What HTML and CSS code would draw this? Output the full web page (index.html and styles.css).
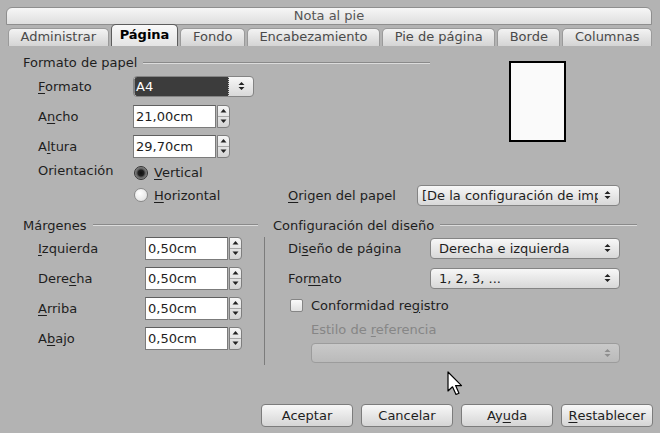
FILE: index.html
```html
<!DOCTYPE html>
<html lang="es">
<head>
    <meta charset="UTF-8">
    <title>Nota al pie</title>
    <link rel="stylesheet" href="styles.css">
</head>
<body>
  <div class="dialog">
    <!-- Title -->
    <div class="titlebar">Nota al pie</div>

    <!-- Tabs -->
    <div class="tabs">
      <div class="tab">Administrar</div>
      <div class="tab active">Página</div>
      <div class="tab">Fondo</div>
      <div class="tab">Encabezamiento</div>
      <div class="tab">Pie de página</div>
      <div class="tab">Borde</div>
      <div class="tab">Columnas</div>
    </div>

    <div class="page">
      <!-- Formato de papel -->
      <div class="paper">
        <div class="heading paper-title">Formato de papel</div>
        <div class="preview"></div>

        <div class="lbl"><span><u>F</u>ormato</span></div>
        <div class="select hl">
          <span class="txt">A4</span>
          <svg class="updown" width="7" height="10" viewBox="0 0 7 10"><path d="M0.5 4 L3.5 1 L6.5 4 Z M0.5 6 L3.5 9 L6.5 6 Z"/></svg>
        </div>

        <div class="lbl"><span>A<u>n</u>cho</span></div>
        <div class="spin">
          <div class="spin-input">21,00cm</div>
          <div class="spin-btns">
            <div><svg width="7" height="5" viewBox="0 0 7 5"><path d="M0.5 4.5 L3.5 1 L6.5 4.5 Z"/></svg></div>
            <div><svg width="7" height="5" viewBox="0 0 7 5"><path d="M0.5 0.5 L3.5 4 L6.5 0.5 Z"/></svg></div>
          </div>
        </div>

        <div class="lbl"><span>A<u>l</u>tura</span></div>
        <div class="spin">
          <div class="spin-input">29,70cm</div>
          <div class="spin-btns">
            <div><svg width="7" height="5" viewBox="0 0 7 5"><path d="M0.5 4.5 L3.5 1 L6.5 4.5 Z"/></svg></div>
            <div><svg width="7" height="5" viewBox="0 0 7 5"><path d="M0.5 0.5 L3.5 4 L6.5 0.5 Z"/></svg></div>
          </div>
        </div>

        <div class="lbl orient"><span>Orientación</span></div>
        <div class="radio"><span class="dot checked"></span><span><u>V</u>ertical</span></div>

        <div class="radio horiz"><span class="dot"></span><span><u>H</u>orizontal</span></div>
        <div class="origen">
          <span class="origen-lbl"><u>O</u>rigen del papel</span>
          <div class="select origen-sel">
            <span class="txt">[De la configuración de impresora]</span>
            <svg class="updown" width="7" height="10" viewBox="0 0 7 10"><path d="M0.5 4 L3.5 1 L6.5 4 Z M0.5 6 L3.5 9 L6.5 6 Z"/></svg>
          </div>
        </div>
      </div>

      <div class="lower">
        <!-- Márgenes -->
        <div class="margins">
          <div class="heading">Márgenes</div>
          <div class="row">
            <span class="mlbl"><u>I</u>zquierda</span>
            <div class="spin">
              <div class="spin-input">0,50cm</div>
              <div class="spin-btns">
                <div><svg width="7" height="5" viewBox="0 0 7 5"><path d="M0.5 4.5 L3.5 1 L6.5 4.5 Z"/></svg></div>
                <div><svg width="7" height="5" viewBox="0 0 7 5"><path d="M0.5 0.5 L3.5 4 L6.5 0.5 Z"/></svg></div>
              </div>
            </div>
          </div>
          <div class="row">
            <span class="mlbl">Dere<u>c</u>ha</span>
            <div class="spin">
              <div class="spin-input">0,50cm</div>
              <div class="spin-btns">
                <div><svg width="7" height="5" viewBox="0 0 7 5"><path d="M0.5 4.5 L3.5 1 L6.5 4.5 Z"/></svg></div>
                <div><svg width="7" height="5" viewBox="0 0 7 5"><path d="M0.5 0.5 L3.5 4 L6.5 0.5 Z"/></svg></div>
              </div>
            </div>
          </div>
          <div class="row">
            <span class="mlbl"><u>A</u>rriba</span>
            <div class="spin">
              <div class="spin-input">0,50cm</div>
              <div class="spin-btns">
                <div><svg width="7" height="5" viewBox="0 0 7 5"><path d="M0.5 4.5 L3.5 1 L6.5 4.5 Z"/></svg></div>
                <div><svg width="7" height="5" viewBox="0 0 7 5"><path d="M0.5 0.5 L3.5 4 L6.5 0.5 Z"/></svg></div>
              </div>
            </div>
          </div>
          <div class="row">
            <span class="mlbl">A<u>b</u>ajo</span>
            <div class="spin">
              <div class="spin-input">0,50cm</div>
              <div class="spin-btns">
                <div><svg width="7" height="5" viewBox="0 0 7 5"><path d="M0.5 4.5 L3.5 1 L6.5 4.5 Z"/></svg></div>
                <div><svg width="7" height="5" viewBox="0 0 7 5"><path d="M0.5 0.5 L3.5 4 L6.5 0.5 Z"/></svg></div>
              </div>
            </div>
          </div>
        </div>

        <div class="vsep"></div>

        <!-- Configuración del diseño -->
        <div class="layout">
          <div class="heading">Configuración del diseño</div>
          <div class="row">
            <span class="llbl">Di<u>s</u>eño de página</span>
            <div class="select wide">
              <span class="txt">Derecha e izquierda</span>
              <svg class="updown" width="7" height="10" viewBox="0 0 7 10"><path d="M0.5 4 L3.5 1 L6.5 4 Z M0.5 6 L3.5 9 L6.5 6 Z"/></svg>
            </div>
          </div>
          <div class="row">
            <span class="llbl">For<u>m</u>ato</span>
            <div class="select wide">
              <span class="txt">1, 2, 3, ...</span>
              <svg class="updown" width="7" height="10" viewBox="0 0 7 10"><path d="M0.5 4 L3.5 1 L6.5 4 Z M0.5 6 L3.5 9 L6.5 6 Z"/></svg>
            </div>
          </div>
          <div class="check-row">
            <span class="check"></span>
            <span>Conformidad re<u>g</u>istro</span>
          </div>
          <div class="disabled-lbl">Estilo de <u>r</u>eferencia</div>
          <div class="select disabled">
            <span class="txt"></span>
            <svg class="updown" width="7" height="10" viewBox="0 0 7 10"><path d="M0.5 4 L3.5 1 L6.5 4 Z M0.5 6 L3.5 9 L6.5 6 Z"/></svg>
          </div>
        </div>
      </div>
    </div>

    <!-- Buttons -->
    <div class="buttons">
      <div class="btn">Aceptar</div>
      <div class="btn">Cancelar</div>
      <div class="btn">Ay<u>u</u>da</div>
      <div class="btn"><u>R</u>establecer</div>
    </div>

    <!-- mouse pointer -->
    <svg class="cursor" width="16" height="26" viewBox="0 0 16 26">
      <path d="M1 1 L1 20 L5.5 15.8 L9 23.5 L12 22.2 L8.6 14.6 L14.5 14.6 Z" fill="#fff" stroke="#000" stroke-width="1.2" stroke-linejoin="round"/>
    </svg>
  </div>
</body>
</html>
```

FILE: styles.css
```css
body { margin: 0; background: #b3b3b3; font-family: "DejaVu Sans", sans-serif; font-size: 13px; color: #1e1e1e; }
u { text-decoration-thickness: 1px; text-underline-offset: 2px; }

.dialog { position: relative; height: 433px; box-sizing: border-box; padding: 7px 0 6px; display: flex; flex-direction: column; }

/* title + tabs */
.titlebar { margin: 0 8px 0 6px; height: 16px; line-height: 16px; border: 1px solid #8e8e8e; border-radius: 6px 6px 0 0; background: linear-gradient(#f6f6f6, #dedede); text-align: center; color: #555; }
.tabs { display: flex; align-items: flex-end; gap: 2px; height: 22px; margin: -1px 8px 0 8px; position: relative; }
.tab { flex: 1 1 auto; height: 17px; line-height: 15px; padding: 0 11px; border: 1px solid #9a9a9a; border-bottom: none; border-radius: 5px 5px 0 0; background: linear-gradient(#f3f3f3, #d4d4d4); color: #4a4a4a; text-align: center; white-space: nowrap; }
.tab.active { flex: 0 0 auto; height: 21px; line-height: 19px; padding: 0 8px; border-color: #5c5c5c; background: linear-gradient(#f9f9f9, #e4e4e4); color: #000; font-weight: bold; }

.page { padding-top: 8px; }

/* group headings */
.heading { display: flex; align-items: center; height: 16px; white-space: nowrap; }
.heading::after { content: ""; flex: 1; margin-left: 6px; border-top: 1px solid #8a8a8a; border-bottom: 1px solid #dcdcdc; }

/* paper format */
.paper { display: grid; grid-template-columns: 110px 132px 1fr; grid-template-rows: 17px 30px 30px 30px 23px 22px; padding-left: 23px; }
.paper-title { grid-column: 1 / 4; grid-row: 1; width: 407px; height: 17px; }
.preview { grid-column: 3; grid-row: 1 / 5; align-self: start; margin: 7px 0 0 244px; width: 57px; height: 81px; box-sizing: border-box; border: 2px solid #000; background: #fafafa; }
.lbl { display: flex; align-items: center; padding-left: 15px; }
.orient { align-items: flex-start; padding-top: 2px; box-sizing: border-box; }
.paper > .select, .paper > .spin { align-self: center; }

/* selects */
.select { display: flex; align-items: center; height: 21px; box-sizing: border-box; border: 1px solid #848484; border-radius: 4px; background: linear-gradient(#f7f7f7, #d8d8d8); padding: 0 8px 0 4px; }
.select .txt { flex: 1; overflow: hidden; white-space: nowrap; }
.updown { flex: none; fill: #222; }
.select.hl { width: 121px; padding: 0 8px 0 0; }
.select.hl .txt { align-self: stretch; line-height: 19px; padding-left: 1px; margin-right: 9px; background: #3c3c3c; color: #fff; border-radius: 3px 0 0 3px; border-left: 1px dotted #ccc; border-right: 1px dotted #ccc; }
.select.wide { width: 190px; padding-left: 8px; }
.select.disabled { width: 309px; height: 20px; margin-left: 38px; border-color: #9c9c9c; background: linear-gradient(#c9c9c9, #bababa); }
.select.disabled .updown { fill: #8e8e8e; }

/* spin fields */
.spin { display: flex; }
.spin-input { width: 83px; height: 23px; box-sizing: border-box; border: 1px solid #7b7b7b; border-top-color: #5f5f5f; background: #fff; padding-left: 2px; line-height: 21px; }
.spin-btns { width: 13px; height: 23px; margin-left: 1px; box-sizing: border-box; border: 1px solid #7e7e7e; border-radius: 0 4px 4px 0; background: linear-gradient(#f6f6f6, #d3d3d3); display: flex; flex-direction: column; }
.spin-btns div { flex: 1; display: flex; align-items: center; justify-content: center; }
.spin-btns div + div { border-top: 1px solid #a8a8a8; }
.spin-btns svg { fill: #222; }

/* radios + checkbox */
.radio { display: flex; align-items: center; gap: 6px; padding-left: 1px; }
.horiz { grid-column: 2; }
.dot { width: 14px; height: 14px; box-sizing: border-box; border-radius: 50%; border: 1px solid #8a8a8a; background: radial-gradient(circle at 40% 35%, #ffffff, #dcdcdc); }
.dot.checked { border-color: #333; background: radial-gradient(circle at 50% 50%, #111 0, #222 3px, #555 4px, #8a8a8a 6px); }
.check-row { display: flex; align-items: center; gap: 8px; height: 24px; padding-left: 17px; }
.check { width: 13px; height: 13px; box-sizing: border-box; border: 1px solid #858585; border-radius: 2px; background: linear-gradient(#fafafa, #e0e0e0); }

.origen { grid-column: 3; display: flex; align-items: center; padding-left: 23px; }
.origen-lbl { width: 129px; }
.origen-sel { width: 203px; }
.origen-sel .txt { margin-right: 6px; }

/* lower part */
.lower { display: grid; grid-template-columns: 241px 1px 1fr; padding-left: 23px; margin-top: 11px; }
.margins .heading { margin-right: 6px; }
.row { display: flex; align-items: center; height: 30px; }
.mlbl { width: 107px; padding-left: 15px; }
.vsep { margin-top: 20px; height: 128px; border-left: 1px solid #7c7c7c; }
.layout { padding-left: 8px; }
.layout .heading { margin-right: 23px; }
.llbl { width: 142px; padding-left: 15px; }
.disabled-lbl { height: 26px; line-height: 26px; padding-left: 38px; color: #868686; }

/* buttons */
.buttons { margin-top: auto; display: flex; justify-content: flex-end; gap: 8px; padding-right: 7px; }
.btn { width: 92px; height: 23px; box-sizing: border-box; border: 1px solid #7c7c7c; border-radius: 4px; background: linear-gradient(#f8f8f8, #d5d5d5); display: flex; align-items: center; justify-content: center; }

.cursor { position: absolute; left: 447px; top: 371px; }
```
